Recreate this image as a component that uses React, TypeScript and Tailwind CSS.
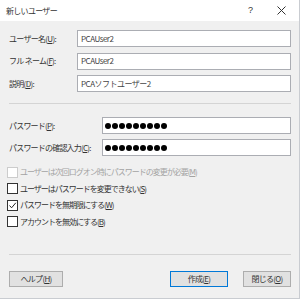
import React from "react";

const font = { fontFamily: '"Noto Sans CJK JP", "Noto Sans", sans-serif' };

function Key({ k }: { k: string }) {
  return (
    <>
      (<span className="underline underline-offset-1">{k}</span>)
    </>
  );
}

function TextRow({ label, k, value }: { label: string; k: string; value: string }) {
  return (
    <div className="flex items-center h-[17px]">
      <div className="w-[68px] text-[8px] tracking-[-0.7px] text-[#333] whitespace-pre">
        {label}
        <Key k={k} />:
      </div>
      <div className="flex-1 h-full border border-[#abadb3] bg-white flex items-center pl-[3px] text-[8px] tracking-[-0.5px] text-[#444]">
        {value}
      </div>
    </div>
  );
}

function PasswordRow({ label, k }: { label: string; k: string }) {
  return (
    <div className="flex items-center h-[17px]">
      <div className="w-[93px] text-[8px] tracking-[-0.8px] text-[#333]">
        {label}
        <Key k={k} />:
      </div>
      <div className="flex-1 h-full border border-[#abadb3] bg-white flex items-center gap-[1px] pl-[2px]">
        {Array.from({ length: 9 }).map((_, i) => (
          <span key={i} className="w-[6px] h-[6px] rounded-full bg-black" />
        ))}
      </div>
    </div>
  );
}

function Check({
  label,
  k,
  checked = false,
  disabled = false,
}: {
  label: string;
  k: string;
  checked?: boolean;
  disabled?: boolean;
}) {
  return (
    <div className="flex items-center h-[16.5px] gap-[2px]">
      <span
        className={`w-[11px] h-[11px] border bg-white flex items-center justify-center ${
          disabled ? "border-[#cccccc]" : "border-[#333333]"
        }`}
      >
        {checked && (
          <svg width="9" height="9" viewBox="0 0 9 9">
            <path d="M1.5 4.5 L3.6 6.8 L7.8 1.8" fill="none" stroke="#222" strokeWidth="1" />
          </svg>
        )}
      </span>
      <span
        className={`text-[8px] tracking-[-1px] ${disabled ? "text-[#a3a3a3]" : "text-[#333]"}`}
      >
        {label}
        <Key k={k} />
      </span>
    </div>
  );
}

function Button({
  label,
  k,
  w,
  primary = false,
}: {
  label: string;
  k: string;
  w: string;
  primary?: boolean;
}) {
  return (
    <button
      className={`${w} h-[16px] bg-[#e1e1e1] border flex items-center justify-center text-[8px] tracking-[-0.7px] text-[#333] ${
        primary ? "border-[#0078d7]" : "border-[#adadad]"
      }`}
    >
      {label}
      <Key k={k} />
    </button>
  );
}

export default function App() {
  return (
    <div style={font} className="w-[300px] h-[299px] bg-[#f0f0f0] border-r border-b border-[#c9ccd1] flex flex-col">
      <div className="h-[21px] bg-white flex items-center pl-[6px] pr-[13px] shrink-0">
        <span className="text-[8px] tracking-[-0.7px] text-[#333]">新しいユーザー</span>
        <span className="ml-auto mr-[24px] text-[9px] text-[#333]" style={{ fontFamily: '"Liberation Sans", sans-serif' }}>
          ?
        </span>
        <svg width="9" height="9" viewBox="0 0 9 9">
          <path d="M0.5 0.5 L8.5 8.5 M8.5 0.5 L0.5 8.5" stroke="#333" strokeWidth="1" />
        </svg>
      </div>

      <div className="flex flex-col pl-[9px] pr-[8px] pt-[9px]">
        <div className="flex flex-col gap-[5.5px]">
          <TextRow label="ユーザー名" k="U" value="PCAUser2" />
          <TextRow label="フル ネーム" k="F" value="PCAUser2" />
          <TextRow label="説明" k="D" value="PCAソフトユーザー2" />
        </div>

        <div className="mt-[11px] border-t border-[#d4d4d4]" />

        <div className="mt-[13px] flex flex-col gap-[5px]">
          <PasswordRow label="パスワード" k="P" />
          <PasswordRow label="パスワードの確認入力" k="C" />
        </div>

        <div className="mt-[8px] -ml-[2px] flex flex-col">
          <Check label="ユーザーは次回ログオン時にパスワードの変更が必要" k="M" disabled />
          <Check label="ユーザーはパスワードを変更できない" k="S" />
          <Check label="パスワードを無期限にする" k="W" checked />
          <Check label="アカウントを無効にする" k="B" />
        </div>

        <div className="mt-[24px] border-t border-[#d4d4d4]" />

        <div className="mt-[16px] flex items-center">
          <Button label="ヘルプ" k="H" w="w-[54px]" />
          <div className="flex-1" />
          <Button label="作成" k="E" w="w-[58px]" primary />
          <div className="w-[15px]" />
          <Button label="閉じる" k="O" w="w-[48px]" />
        </div>
      </div>
    </div>
  );
}
